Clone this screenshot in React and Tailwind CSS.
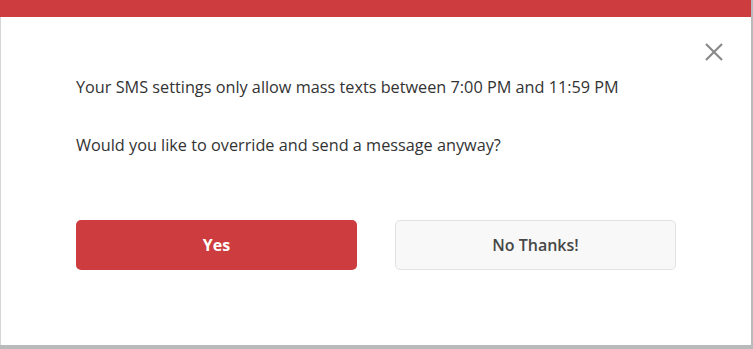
import React from "react";

const CloseIcon = () => (
  <svg width="18" height="18" viewBox="0 0 18 18" fill="none">
    <path d="M1 1L17 17M17 1L1 17" stroke="#8a8a8a" strokeWidth="2.2" />
  </svg>
);

const App = () => {
  return (
    <div
      className="w-[753px] h-[349px] bg-[#b9babc] overflow-hidden"
      style={{ fontFamily: '"Open Sans", "Liberation Sans", sans-serif' }}
    >
      <div className="relative w-[751px] h-[345px] bg-white border-l border-[#d4d5d6]">
        <div className="h-[17px] bg-[#cd3c3e] -ml-px"></div>

        <button
          type="button"
          className="absolute top-[43px] right-[28px] w-[18px] h-[18px] flex items-center justify-center"
        >
          <CloseIcon />
        </button>

        <div className="pt-[58px] pl-[75px] pr-[70px] text-[#333333]">
          <p className="text-[16.25px] leading-6 mb-[34px]">
            Your SMS settings only allow mass texts between 7:00 PM and 11:59 PM
          </p>
          <p className="text-[16.25px] leading-6">
            Would you like to override and send a message anyway?
          </p>

          <div className="flex gap-[38px] mt-[63px]">
            <button
              type="button"
              className="w-[281px] h-[50px] rounded-[5px] bg-[#cd3c3e] text-white font-bold text-base"
            >
              Yes
            </button>
            <button
              type="button"
              className="w-[281px] h-[50px] rounded-[5px] bg-[#f8f8f8] border border-[#e2e2e2] text-[#474747] font-semibold text-base"
            >
              No Thanks!
            </button>
          </div>
        </div>
      </div>
    </div>
  );
};

export default App;
